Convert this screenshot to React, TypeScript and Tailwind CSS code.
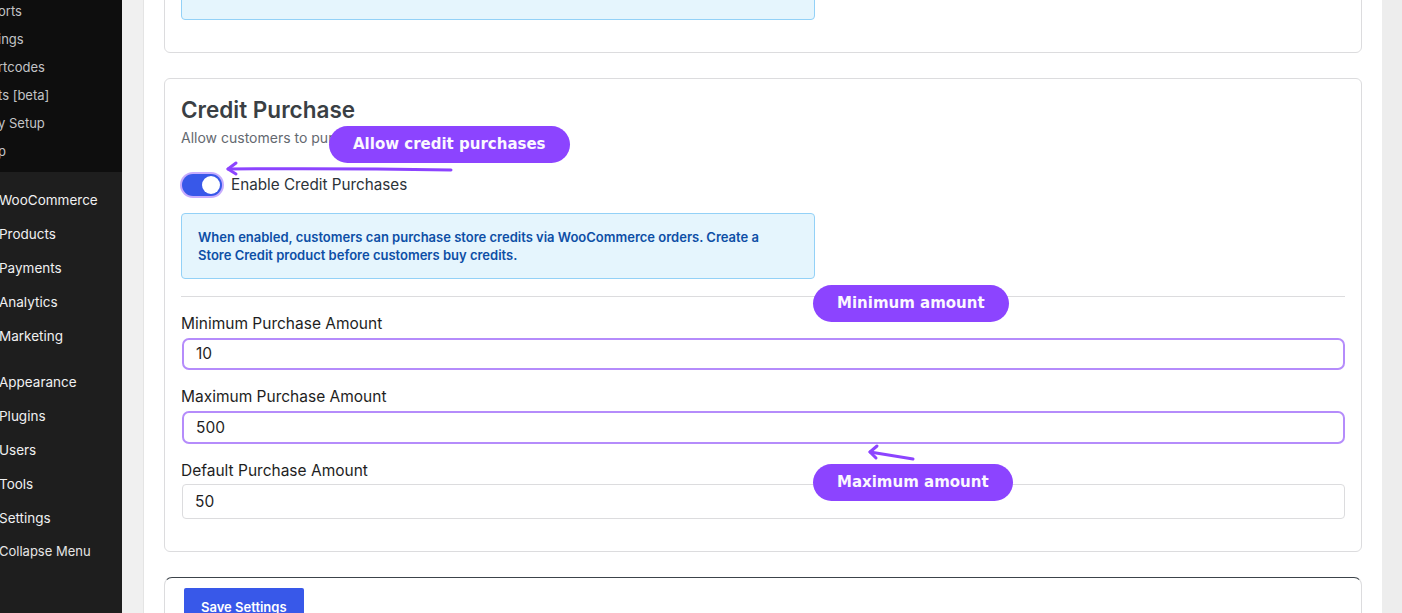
import React from 'react';

const subMenu = ['orts', 'ings', 'rtcodes', 'ts [beta]', 'y Setup', 'p'];
const mainMenu = ['WooCommerce', 'Products', 'Payments', 'Analytics', 'Marketing'];
const lowerMenu = ['Appearance', 'Plugins', 'Users', 'Tools', 'Settings'];

const Pill = ({ label, className }: { label: string; className: string }) => (
  <div
    className={`absolute rounded-full bg-[#8c44ff] px-6 py-[10px] text-[15px] leading-[17px] font-bold whitespace-nowrap text-[#fbf8ff] ${className}`}
    style={{ fontFamily: '"DejaVu Sans", Verdana, sans-serif' }}
  >
    {label}
  </div>
);

const Field = ({ label, value, highlight, spacing, height }: { label: string; value: string; highlight?: boolean; spacing: string; height: string }) => (
  <div className="mt-[17px] first:mt-[16px]">
    <label className="block text-[15.5px] leading-[20px] text-[#1e1e1e]">{label}</label>
    <div
      className={`${spacing} ${height} flex items-center ml-px px-[12px] text-[15.5px] text-[#1e1e1e] bg-white ${
        highlight ? 'rounded-[7px] border-2 border-[#b58cfb]' : 'rounded-[4px] border border-[#dcdcde]'
      }`}
    >
      {value}
    </div>
  </div>
);

export default function App() {
  return (
    <div
      className="relative flex h-[613px] w-full overflow-hidden bg-[#f0f0f1]"
      style={{ fontFamily: 'Inter, "Noto Sans", sans-serif' }}
    >
      {/* Admin sidebar */}
      <aside className="flex w-[122px] shrink-0 flex-col overflow-hidden bg-[#1e1e1e]">
        <div className="h-[172px] bg-[#0e0e0e]">
          <ul className="-mt-[3px] -ml-[2px]">
            {subMenu.map((item) => (
              <li key={item} className="text-[13px] leading-[28px] text-[#c3c4c7] whitespace-nowrap">
                {item}
              </li>
            ))}
          </ul>
        </div>
        <ul className="pt-[11px] -ml-px">
          {mainMenu.map((item) => (
            <li key={item} className="flex h-[34px] items-center text-[13.5px] text-[#f0f0f1] whitespace-nowrap">
              {item}
            </li>
          ))}
        </ul>
        <ul className="mt-[12px] -ml-px">
          {lowerMenu.map((item) => (
            <li key={item} className="flex h-[34px] items-center text-[13.5px] text-[#f0f0f1] whitespace-nowrap">
              {item}
            </li>
          ))}
          <li className="flex h-[34px] items-center text-[13px] text-[#e5e5e5] whitespace-nowrap">Collapse Menu</li>
        </ul>
      </aside>

      <div className="w-[21px] shrink-0 bg-[#f0f0f0]" />

      {/* Settings panel */}
      <main className="flex-1 border-l border-[#e4e4e4] bg-white px-[20px]">
        <section className="-mt-[40px] rounded-[6px] border border-[#dcdcde] px-[16px] pt-[16px] pb-[32px]">
          <div className="h-[43px] w-[634px] rounded-[4px] border border-[#93d1f7] bg-[#e5f5fd]" />
        </section>

        <section className="mt-[25px] rounded-[6px] border border-[#dcdcde] px-[16px] pt-[16px] pb-[32px]">
          <h2 className="text-[22.5px] leading-[29px] font-semibold text-[#3a3f44]">Credit Purchase</h2>
          <p className="mt-[4px] text-[14px] leading-[20px] text-[#646970]">
            Allow customers to purchase store credits.
          </p>

          <div className="mt-[24px] flex h-[26px] items-center gap-[9px]">
            <div className="relative ml-px h-[22px] w-[40px] rounded-full bg-[#3858e9] ring-2 ring-[#c7acfd]">
              <span className="absolute top-[2px] left-[20px] h-[18px] w-[18px] rounded-full bg-white" />
            </div>
            <span className="text-[15.25px] text-[#2c3338]">Enable Credit Purchases</span>
          </div>

          <div className="mt-[15px] w-[634px] rounded-[4px] border border-[#93d1f7] bg-[#e5f5fd] px-[16px] py-[14px] text-[13px] leading-[18px] font-semibold text-[#0d4fa6]">
            When enabled, customers can purchase store credits via WooCommerce orders. Create a
            <br />
            Store Credit product before customers buy credits.
          </div>

          <hr className="mt-[17px] border-t border-[#dcdcde]" />

          <Field label="Minimum Purchase Amount" value="10" highlight spacing="mt-[4px]" height="h-[32px]" />
          <Field label="Maximum Purchase Amount" value="500" highlight spacing="mt-[4px]" height="h-[33px]" />
          <Field label="Default Purchase Amount" value="50" spacing="mt-[3px]" height="h-[35px]" />
        </section>

        <section className="mt-[25px] h-[60px] rounded-[8px] border border-[#dcdcde] border-t-[#3c434a] pt-[10px] pl-[19px]">
          <button className="h-[36px] rounded-[2px] bg-[#3858e9] px-[17px] pt-[3px] text-[13px] font-semibold text-white">
            Save Settings
          </button>
        </section>
      </main>

      <div className="w-[20px] shrink-0 bg-[#ededed]" />

      {/* Annotations */}
      <svg className="pointer-events-none absolute inset-0" width="1402" height="613">
        <g fill="none" stroke="#8c44ff" strokeWidth="3" strokeLinecap="round" strokeLinejoin="round">
          <path d="M451 170 Q340 168 228 169" />
          <path d="M236 163 L228 169 L236 174" />
          <path d="M913 459 L870 452" />
          <path d="M877 446 L870 452 L876 458" />
        </g>
      </svg>
      <Pill label="Allow credit purchases" className="left-[329px] top-[126px]" />
      <Pill label="Minimum amount" className="left-[813px] top-[285px]" />
      <Pill label="Maximum amount" className="left-[813px] top-[464px]" />
    </div>
  );
}
